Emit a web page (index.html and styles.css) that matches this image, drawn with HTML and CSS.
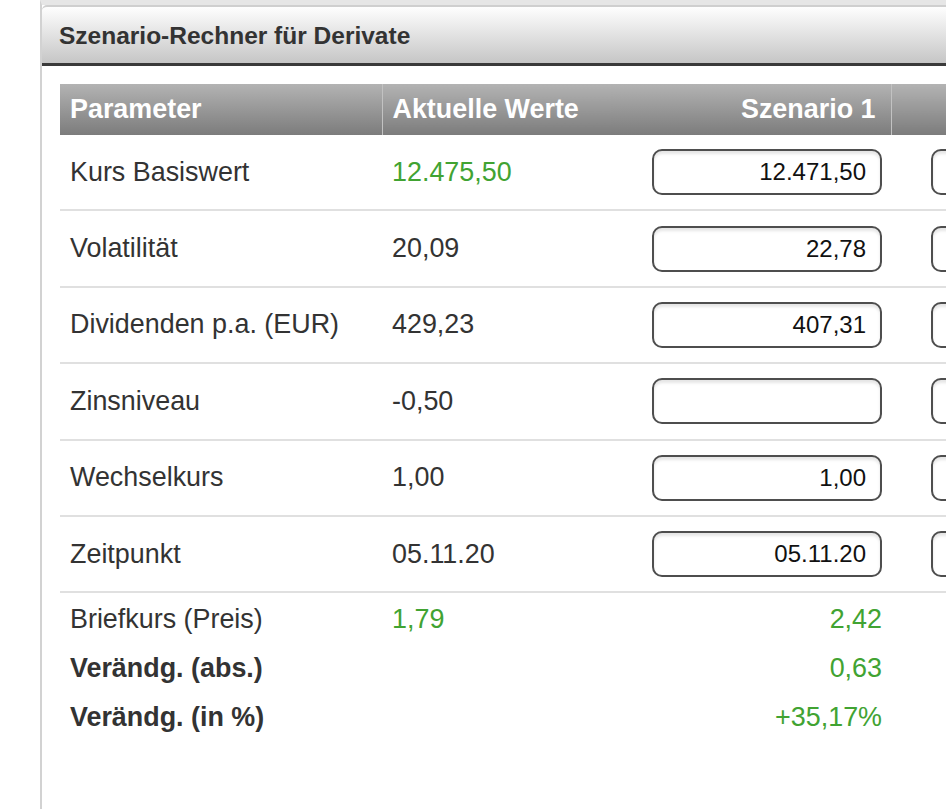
FILE: index.html
```html
<!DOCTYPE html>
<html lang="de">
<head>
<meta charset="UTF-8" />
<meta name="viewport" content="width=device-width, initial-scale=1" />
<title>Szenario-Rechner</title>
<link rel="stylesheet" href="styles.css">
</head>
<body>
  <section class="panel">
    <h2 class="panel-head">Szenario-Rechner für Derivate</h2>
    <div class="panel-body">
      <table class="calc">
        <colgroup>
          <col class="c-param">
          <col class="c-now">
          <col class="c-scen">
          <col class="c-scen">
        </colgroup>
        <thead>
          <tr>
            <th>Parameter</th>
            <th class="sep">Aktuelle Werte</th>
            <th class="num">Szenario 1</th>
            <th class="num sep"></th>
          </tr>
        </thead>
        <tbody>
          <tr>
            <td>Kurs Basiswert</td>
            <td class="up">12.475,50</td>
            <td class="num"><input type="text" value="12.471,50"></td>
            <td class="num"><input type="text" value=""></td>
          </tr>
          <tr>
            <td>Volatilität</td>
            <td>20,09</td>
            <td class="num"><input type="text" value="22,78"></td>
            <td class="num"><input type="text" value=""></td>
          </tr>
          <tr>
            <td>Dividenden p.a. (EUR)</td>
            <td>429,23</td>
            <td class="num"><input type="text" value="407,31"></td>
            <td class="num"><input type="text" value=""></td>
          </tr>
          <tr>
            <td>Zinsniveau</td>
            <td>-0,50</td>
            <td class="num"><input type="text" value=""></td>
            <td class="num"><input type="text" value=""></td>
          </tr>
          <tr>
            <td>Wechselkurs</td>
            <td>1,00</td>
            <td class="num"><input type="text" value="1,00"></td>
            <td class="num"><input type="text" value=""></td>
          </tr>
          <tr>
            <td>Zeitpunkt</td>
            <td>05.11.20</td>
            <td class="num"><input type="text" value="05.11.20"></td>
            <td class="num"><input type="text" value=""></td>
          </tr>
        </tbody>
        <tbody class="result">
          <tr>
            <td>Briefkurs (Preis)</td>
            <td class="up">1,79</td>
            <td class="num up">2,42</td>
            <td></td>
          </tr>
          <tr>
            <td class="strong">Verändg. (abs.)</td>
            <td></td>
            <td class="num up">0,63</td>
            <td></td>
          </tr>
          <tr>
            <td class="strong">Verändg. (in %)</td>
            <td></td>
            <td class="num up">+35,17%</td>
            <td></td>
          </tr>
        </tbody>
      </table>
    </div>
  </section>
</body>
</html>
```

FILE: styles.css
```css
html, body {
  margin: 0;
  background: #fff;
  overflow: hidden;
}

body {
  font-family: 'Liberation Sans', Arial, sans-serif;
  color: #333;
}

.panel {
  margin-left: 40px;
  min-height: 809px;
  background: #fff;
  border-left: 2px solid #d2d2d2;
  border-top: 5px solid #e6e6e6;
  overflow: hidden;
}

.panel-head {
  margin: 0;
  height: 56px;
  line-height: 58px;
  padding-left: 17px;
  font-size: 24.5px;
  font-weight: 700;
  color: #333;
  background: linear-gradient(#fefefe, #c6c6c6);
  border-top: 2px solid #cfcfcf;
  border-bottom: 3px solid #3a3a3a;
  border-top-left-radius: 5px;
  white-space: nowrap;
}

.panel-body {
  padding: 18px 0 0 18px;
}

.calc {
  border-collapse: collapse;
  table-layout: fixed;
  width: 1110px;
  font-size: 26.9px;
}

.c-param { width: 322px; }
.c-now { width: 230px; }
.c-scen { width: 279px; }

.calc th {
  height: 51px;
  padding: 0 10px;
  text-align: left;
  font-weight: 700;
  color: #fff;
  background: linear-gradient(#b3b3b3, #7c7c7c);
  white-space: nowrap;
}

.calc th.num {
  text-align: right;
  padding-right: 15px;
}

.calc th.sep {
  border-left: 1px solid #c2c2c2;
}

.calc td {
  height: 74.4px;
  padding: 0 10px;
  border-bottom: 2px solid #e0e0e0;
  white-space: nowrap;
}

.calc td.num {
  text-align: right;
  padding-right: 9px;
}

.calc .result td {
  height: 49px;
  border-bottom: none;
}

.calc .result tr:first-child td {
  padding-top: 2px;
}

.up {
  color: #41a332;
}

.strong {
  font-weight: 700;
}

.calc input {
  box-sizing: border-box;
  width: 230px;
  height: 46px;
  padding: 0 14px;
  border: 2px solid #4e4e4e;
  border-radius: 10px;
  background: #fff;
  box-shadow: inset 0 3px 3px rgba(0,0,0,0.1);
  font-family: 'Liberation Sans', Arial, sans-serif;
  font-size: 24px;
  color: #111;
  text-align: right;
  vertical-align: middle;
}
```
